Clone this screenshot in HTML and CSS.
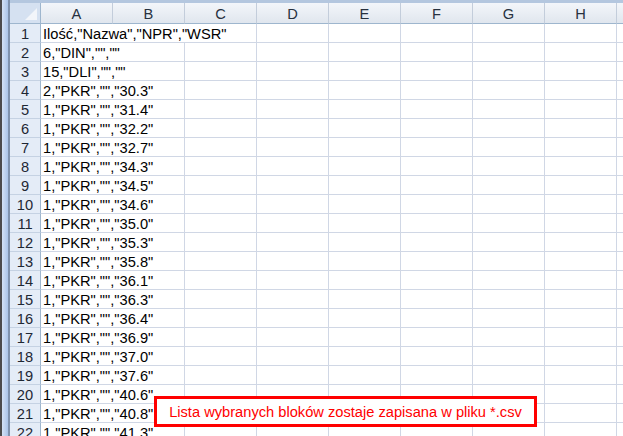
FILE: index.html
```html
<!DOCTYPE html>
<html lang="pl">
<head>
    <meta charset="UTF-8">
    <title>Arkusz CSV</title>
    <link rel="stylesheet" href="styles.css">
</head>
<body>
    <div class="frame"></div>
    <div class="sheet-area">
        <table class="sheet">
            <colgroup>
                <col class="col-rowhead">
                <col class="col"><col class="col"><col class="col"><col class="col">
                <col class="col"><col class="col"><col class="col"><col class="col"><col class="col">
            </colgroup>
            <thead>
                <tr>
                    <th class="corner"><span class="corner-tri"></span></th>
                    <th>A</th><th>B</th><th>C</th><th>D</th><th>E</th><th>F</th><th>G</th><th>H</th><th></th>
                </tr>
            </thead>
            <tbody>
                <tr><th>1</th><td colspan="3">Ilość,"Nazwa","NPR","WSR"</td><td></td><td></td><td></td><td></td><td></td><td></td></tr>
                <tr><th>2</th><td colspan="2">6,"DIN","",""</td><td></td><td></td><td></td><td></td><td></td><td></td><td></td></tr>
                <tr><th>3</th><td colspan="2">15,"DLI","",""</td><td></td><td></td><td></td><td></td><td></td><td></td><td></td></tr>
                <tr><th>4</th><td colspan="2">2,"PKR","","30.3"</td><td></td><td></td><td></td><td></td><td></td><td></td><td></td></tr>
                <tr><th>5</th><td colspan="2">1,"PKR","","31.4"</td><td></td><td></td><td></td><td></td><td></td><td></td><td></td></tr>
                <tr><th>6</th><td colspan="2">1,"PKR","","32.2"</td><td></td><td></td><td></td><td></td><td></td><td></td><td></td></tr>
                <tr><th>7</th><td colspan="2">1,"PKR","","32.7"</td><td></td><td></td><td></td><td></td><td></td><td></td><td></td></tr>
                <tr><th>8</th><td colspan="2">1,"PKR","","34.3"</td><td></td><td></td><td></td><td></td><td></td><td></td><td></td></tr>
                <tr><th>9</th><td colspan="2">1,"PKR","","34.5"</td><td></td><td></td><td></td><td></td><td></td><td></td><td></td></tr>
                <tr><th>10</th><td colspan="2">1,"PKR","","34.6"</td><td></td><td></td><td></td><td></td><td></td><td></td><td></td></tr>
                <tr><th>11</th><td colspan="2">1,"PKR","","35.0"</td><td></td><td></td><td></td><td></td><td></td><td></td><td></td></tr>
                <tr><th>12</th><td colspan="2">1,"PKR","","35.3"</td><td></td><td></td><td></td><td></td><td></td><td></td><td></td></tr>
                <tr><th>13</th><td colspan="2">1,"PKR","","35.8"</td><td></td><td></td><td></td><td></td><td></td><td></td><td></td></tr>
                <tr><th>14</th><td colspan="2">1,"PKR","","36.1"</td><td></td><td></td><td></td><td></td><td></td><td></td><td></td></tr>
                <tr><th>15</th><td colspan="2">1,"PKR","","36.3"</td><td></td><td></td><td></td><td></td><td></td><td></td><td></td></tr>
                <tr><th>16</th><td colspan="2">1,"PKR","","36.4"</td><td></td><td></td><td></td><td></td><td></td><td></td><td></td></tr>
                <tr><th>17</th><td colspan="2">1,"PKR","","36.9"</td><td></td><td></td><td></td><td></td><td></td><td></td><td></td></tr>
                <tr><th>18</th><td colspan="2">1,"PKR","","37.0"</td><td></td><td></td><td></td><td></td><td></td><td></td><td></td></tr>
                <tr><th>19</th><td colspan="2">1,"PKR","","37.6"</td><td></td><td></td><td></td><td></td><td></td><td></td><td></td></tr>
                <tr><th>20</th><td colspan="2">1,"PKR","","40.6"</td><td></td><td></td><td></td><td></td><td></td><td></td><td></td></tr>
                <tr><th>21</th><td colspan="2">1,"PKR","","40.8"</td><td></td><td></td><td></td><td></td><td></td><td></td><td></td></tr>
                <tr><th>22</th><td colspan="2">1,"PKR","","41.3"</td><td></td><td></td><td></td><td></td><td></td><td></td><td></td></tr>
            </tbody>
        </table>
    </div>

    <div class="callout">Lista wybranych bloków zostaje zapisana w pliku *.csv</div>
</body>
</html>
```

FILE: styles.css
```css
html, body {
    margin: 0;
    height: 100%;
    overflow: hidden;
}
body {
    display: flex;
    background: #ffffff;
    font-family: "Liberation Sans", Arial, sans-serif;
    font-size: 14.67px;
    color: #000;
}
.frame {
    flex: 0 0 10px;
    background: linear-gradient(to right, #4b4b4b 0 2px, #d3e2f5 2px, #aac4e7 8px, #7f93ad 8px 10px);
}
.sheet-area {
    flex: 1;
    padding-top: 3px;
    background: linear-gradient(#b4c7df 0 3px, #ffffff 3px);
    overflow: hidden;
}
.sheet {
    border-collapse: separate;
    border-spacing: 0;
    table-layout: fixed;
    width: 679px;
}
.col-rowhead {
    width: 31px;
}
.col {
    width: 72px;
}
.sheet th,
.sheet td {
    box-sizing: border-box;
    padding: 2px 0 0 2px;
    height: 19px;
    line-height: 16px;
    white-space: nowrap;
    overflow: hidden;
    border-right: 1px solid #d0d7e5;
    border-bottom: 1px solid #d0d7e5;
    text-align: left;
    font-weight: normal;
}
.sheet thead th {
    height: 21px;
    padding: 3px 0 1px;
    text-align: center;
    color: #27313f;
    background: linear-gradient(#f3f6fa, #e0e6ee);
    border-right: 1px solid #c3cddb;
    border-bottom: 1px solid #9eb6ce;
}
.sheet tbody th {
    padding: 2px 0 0;
    text-align: center;
    color: #1e2733;
    background: #e4ecf7;
    border-right: 1px solid #9eb6ce;
    border-bottom: 1px solid #c5d2e3;
}
.sheet thead th.corner {
    position: relative;
    background: #d5e1f1;
    border-right: 1px solid #9eb6ce;
}
.corner-tri {
    position: absolute;
    right: 3px;
    bottom: 3px;
    width: 0;
    height: 0;
    border-left: 12px solid transparent;
    border-bottom: 12px solid #f2f5fa;
}
.callout {
    position: absolute;
    left: 154px;
    top: 396px;
    width: 383px;
    height: 31px;
    box-sizing: border-box;
    border: 3px solid #ff0000;
    background: #ffffff;
    color: #ff0000;
    display: flex;
    align-items: center;
    justify-content: center;
}
```
